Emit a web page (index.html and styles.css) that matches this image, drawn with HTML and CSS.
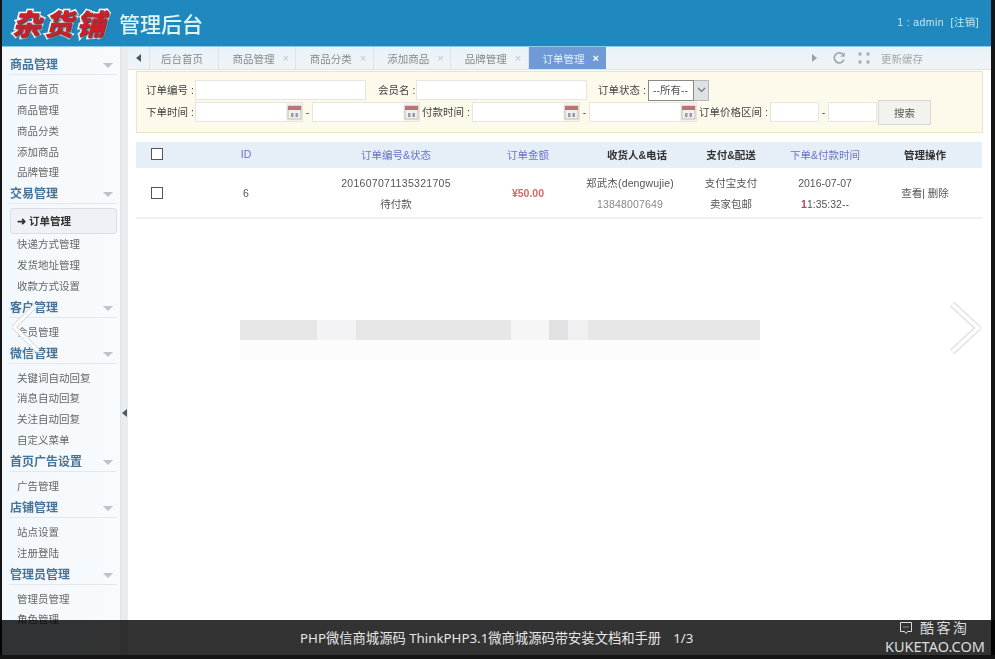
FILE: index.html
```html
<!DOCTYPE html>
<html lang="zh-CN">
<head>
<meta charset="utf-8">
<title>杂货铺 管理后台</title>
<link rel="stylesheet" href="styles.css">
</head>
<body>
<svg class="defs" width="0" height="0" aria-hidden="true">
  <symbol id="cal" viewBox="0 0 15 15">
    <rect x="1" y="1" width="13" height="13" fill="#f3efe8" stroke="#c4bdb5"/>
    <rect x="1" y="1" width="13" height="4" fill="#b9737a"/>
    <path d="M4 8h2.5v4H4zM8.5 8H11v4H8.5z" fill="#8c9cb2"/>
  </symbol>
</svg>
<div class="shot">
  <div class="app">
    <header class="top">
      <div class="logo">杂货铺</div>
      <div class="title">管理后台</div>
      <div class="user">1 : admin &nbsp;[注销]</div>
    </header>
    <div class="body">
      <aside class="side">
        <h3 class="group">商品管理<i class="down"></i></h3>
        <a class="item">后台首页</a>
        <a class="item">商品管理</a>
        <a class="item">商品分类</a>
        <a class="item">添加商品</a>
        <a class="item">品牌管理</a>
        <h3 class="group">交易管理<i class="down"></i></h3>
        <a class="item active">➜ 订单管理</a>
        <a class="item">快递方式管理</a>
        <a class="item">发货地址管理</a>
        <a class="item">收款方式设置</a>
        <h3 class="group">客户管理<i class="down"></i></h3>
        <a class="item">会员管理</a>
        <h3 class="group">微信管理<i class="down"></i></h3>
        <a class="item">关键词自动回复</a>
        <a class="item">消息自动回复</a>
        <a class="item">关注自动回复</a>
        <a class="item">自定义菜单</a>
        <h3 class="group">首页广告设置<i class="down"></i></h3>
        <a class="item">广告管理</a>
        <h3 class="group">店铺管理<i class="down"></i></h3>
        <a class="item">站点设置</a>
        <a class="item">注册登陆</a>
        <h3 class="group">管理员管理<i class="down"></i></h3>
        <a class="item">管理员管理</a>
        <a class="item">角色管理</a>
      </aside>
      <div class="split"><i class="tri-left small"></i></div>
      <main class="main">
        <nav class="tabs">
          <span class="nav-arrow"><i class="tri-left"></i></span>
          <span class="tab first">后台首页</span>
          <span class="tab">商品管理<b>×</b></span>
          <span class="tab">商品分类<b>×</b></span>
          <span class="tab">添加商品<b>×</b></span>
          <span class="tab">品牌管理<b>×</b></span>
          <span class="tab on">订单管理<b>×</b></span>
          <span class="tools">
            <i class="tri-right"></i>
            <svg class="tool" width="14" height="14" viewBox="0 0 14 14"><path d="M11.5 4.2A5 5 0 1 0 12 8.5" fill="none" stroke="#a3abb0" stroke-width="1.8"/><path d="M12.8 1.2v4.6H8.2z" fill="#a3abb0"/></svg>
            <svg class="tool" width="14" height="14" viewBox="0 0 14 14" fill="#a3abb0"><rect x="1.5" y="1.5" width="3" height="3"/><rect x="9.5" y="1.5" width="3" height="3"/><rect x="1.5" y="9.5" width="3" height="3"/><rect x="9.5" y="9.5" width="3" height="3"/></svg>
            <span class="refresh">更新缓存</span>
          </span>
        </nav>
        <form class="filter">
          <div class="frow">
            <label class="lab w-lab">订单编号 :</label><input class="inp w-order">
            <label class="lab w-name">会员名 :</label><input class="inp w-order">
            <label class="lab w-status">订单状态 :</label>
            <span class="sel"><select class="sel-box"><option>--所有--</option></select><span class="sel-btn"><svg width="9" height="6" viewBox="0 0 9 6"><path d="M1 1l3.5 3.5L8 1" fill="none" stroke="#6f7880" stroke-width="1.2"/></svg></span></span>
          </div>
          <div class="frow second">
            <label class="lab w-lab">下单时间 :</label>
            <span class="date"><svg class="cal" width="15" height="15"><use href="#cal"/></svg></span><span class="dash">-</span>
            <span class="date"><svg class="cal" width="15" height="15"><use href="#cal"/></svg></span>
            <label class="lab w-pay">付款时间 :</label>
            <span class="date"><svg class="cal" width="15" height="15"><use href="#cal"/></svg></span><span class="dash">-</span>
            <span class="date"><svg class="cal" width="15" height="15"><use href="#cal"/></svg></span>
            <label class="lab w-price">订单价格区间 :</label>
            <input class="inp w-price-inp"><span class="dash">-</span><input class="inp w-price-inp">
            <button class="search" type="button">搜索</button>
          </div>
        </form>
        <table class="list">
          <thead>
            <tr>
              <th class="c-check"><input type="checkbox" class="box"></th>
              <th class="c-id blue">ID</th>
              <th class="c-no blue">订单编号&amp;状态</th>
              <th class="c-amt blue">订单金额</th>
              <th class="c-rcv">收货人&amp;电话</th>
              <th class="c-pay">支付&amp;配送</th>
              <th class="c-time blue">下单&amp;付款时间</th>
              <th class="c-op">管理操作</th>
            </tr>
          </thead>
          <tbody>
            <tr>
              <td><input type="checkbox" class="box"></td>
              <td>6</td>
              <td class="num"><p>201607071135321705</p><p>待付款</p></td>
              <td class="money">¥50.00</td>
              <td class="rcv"><p>郑武杰(dengwujie)</p><p class="soft">13848007649</p></td>
              <td class="dbl"><p>支付宝支付</p><p>卖家包邮</p></td>
              <td class="dbl"><p>2016-07-07</p><p><span class="pink">1</span>1:35:32--</p></td>
              <td class="op">查看| 删除</td>
            </tr>
          </tbody>
        </table>
      </main>
    </div>
  </div>

  <div class="mosaic" aria-hidden="true">
    <div class="mos-main">
      <span class="m1"></span><span class="m2"></span><span class="m3"></span><span class="m4"></span><span class="m5"></span><span class="m6"></span><span class="m7"></span>
    </div>
    <div class="mos-faint"></div>
  </div>

  <svg class="chev chev-l" width="30" height="58" viewBox="0 0 30 58"><polyline points="24,7 2,29 26,53" fill="none" stroke="#d8dbdf" stroke-width="5"/><polyline points="24,7 2,29 26,53" fill="none" stroke="#fff" stroke-width="3"/></svg>
  <svg class="chev chev-r" width="32" height="54" viewBox="0 0 32 54"><polyline points="3,3 29,27 3,51" fill="none" stroke="#d5d8dc" stroke-width="6"/><polyline points="3,3 29,27 3,51" fill="none" stroke="#fff" stroke-width="4"/></svg>

  <footer class="bar">
    <div class="caption">PHP微信商城源码 ThinkPHP3.1微商城源码带安装文档和手册<span class="count">1/3</span></div>
    <div class="mark">
      <div class="mark-top">
        <svg width="14" height="14" viewBox="0 0 14 14"><path d="M1.5 1.5h11v9H8.5L7 12.5 5.5 10.5h-4z" fill="none" stroke="#ddd"/><path d="M4.5 6h1M6.5 6h1M8.5 6h1" stroke="#ddd"/></svg>
        <span>酷客淘</span>
      </div>
      <div class="mark-url">KUKETAO.COM</div>
    </div>
  </footer>
</div>
</body>
</html>
```

FILE: styles.css
```css
* { box-sizing: border-box; }
html, body { margin: 0; height: 100%; overflow: hidden; }
body {
  background: #141414;
  font-family: "Liberation Sans", "Noto Sans CJK SC", sans-serif;
  font-size: 10.5px;
  color: #555;
}
.defs { position: absolute; }
.shot { position: relative; width: 995px; height: 659px; overflow: hidden; }
.app {
  width: 989px;
  height: 655px;
  margin-left: 2px;
  background: #fff;
  display: flex;
  flex-direction: column;
  overflow: hidden;
  filter: blur(.7px);
}

/* header */
.top {
  height: 47px;
  flex: none;
  background: #1f88bf;
  display: flex;
  align-items: center;
  padding: 0 12px 0 10px;
  border-bottom: 1px solid #8fcbe6;
}
.logo {
  font-family: "Noto Sans CJK SC", sans-serif;
  font-weight: 900;
  font-size: 29px;
  letter-spacing: 3px;
  font-style: italic;
  line-height: 1;
  color: #cc1f27;
  -webkit-text-stroke: 3px #fff;
  paint-order: stroke fill;
  text-shadow: 1px 1px 2px #123a55;
  width: 108px;
  margin-top: -2px;
}
.title {
  font-family: "Noto Sans CJK SC", sans-serif;
  font-size: 21px;
  font-weight: 500;
  color: #dff6f6;
  line-height: 1;
  margin-left: -1px;
}
.user {
  margin-left: auto;
  color: #c4e8f0;
  font-size: 10.5px;
  letter-spacing: .4px;
  margin-top: -3px;
}

.body { flex: 1; display: flex; min-height: 0; }

/* sidebar */
.side {
  width: 118px;
  flex: none;
  background: linear-gradient(90deg, #f3f8fc, #f8fbfd);
  padding: 7px 3px 0 7px;
  overflow: hidden;
}
.group {
  position: relative;
  margin: 0 0 4px;
  height: 21px;
  line-height: 23px;
  padding-left: 1px;
  font-size: 12px;
  font-weight: 700;
  color: #467399;
  border-bottom: 1px solid #e3e8ec;
}
.down {
  position: absolute;
  right: 4px;
  top: 9px;
  border: 5px solid transparent;
  border-top: 5px solid #bcc2c8;
  border-bottom: 0;
}
.item {
  display: block;
  height: 20.85px;
  line-height: 20.85px;
  padding-left: 8px;
  color: #666;
}
.item.active {
  height: 26px;
  line-height: 24px;
  margin-left: 1px;
  padding-left: 6px;
  color: #333;
  font-weight: 700;
  background: #eef2f6;
  border: 1px solid #d9dfe5;
  border-radius: 3px;
}

.split {
  width: 8px;
  flex: none;
  background: #e9ecef;
  border-left: 1px solid #dfe3e6;
  display: flex;
  align-items: flex-start;
  justify-content: flex-start;
  padding: 362px 0 0 1px;
}
.tri-left {
  display: inline-block;
  border: 4px solid transparent;
  border-right: 5px solid #4d5a63;
  border-left: 0;
}
.tri-right {
  display: inline-block;
  border: 4px solid transparent;
  border-left: 5px solid #9aa2a8;
  border-right: 0;
  margin-right: 4px;
}

/* main */
.main { flex: 1; min-width: 0; display: flex; flex-direction: column; }
.tabs {
  height: 23px;
  flex: none;
  display: flex;
  align-items: stretch;
  background: linear-gradient(#e7f3f9, #f0f4f6);
  border-bottom: 1px solid #e4e2d4;
  color: #888;
}
.nav-arrow {
  width: 22px;
  display: flex;
  align-items: center;
  justify-content: center;
  border-right: 1px solid #dde4e8;
}
.tab {
  width: 77.4px;
  display: flex;
  align-items: center;
  justify-content: center;
  gap: 8px;
  padding-left: 7px;
  border-right: 1px solid #dde4e8;
  white-space: nowrap;
}
.tab.first { width: 69px; padding: 0 4px 0 0; }
.tab b { font-weight: 400; color: #c0c6ca; font-size: 11px; }
.tab.on { background: #6f9ad6; color: #e4effb; border-right: 0; }
.tab.on b { color: #fff; font-weight: 700; }
.tools {
  margin-left: auto;
  display: flex;
  align-items: center;
  gap: 11px;
  padding-right: 68px;
  color: #a8a8a8;
}
.refresh { margin-left: -1px; }

/* filter */
.filter {
  margin: 1px 8px 0;
  height: 62px;
  flex: none;
  background: #fdfaec;
  border: 1px solid #ebe5c8;
  padding: 8px 0 0 9px;
  color: #444;
}
.frow { display: flex; align-items: center; height: 20px; }
.second { margin-top: 2px; }
.lab { white-space: nowrap; padding-bottom: 2px; }
.w-lab { width: 49px; }
.w-name { width: 38px; margin-left: 12px; }
.w-status { width: 50px; margin-left: 11px; }
.w-pay { width: 50px; margin-left: 2px; }
.w-price { width: 71px; margin-left: 2px; }
.inp {
  height: 20px;
  padding: 0;
  background: #fff;
  border: 1px solid #e6e6df;
  outline: 0;
  flex: none;
}
.w-order { width: 171px; }
.w-price-inp { width: 49px; }
.date {
  width: 108px;
  height: 20px;
  flex: none;
  display: flex;
  align-items: center;
  justify-content: flex-end;
  background: linear-gradient(90deg, #fff 85%, #f4f2ec 85%);
  border: 1px solid #e6e6df;
  padding-right: 0;
}
.dash { width: 9px; text-align: center; flex: none; }
.sel { display: flex; width: 61px; height: 21px; flex: none; }
.sel-box {
  appearance: none;
  flex: 1;
  min-width: 0;
  height: 21px;
  border: 1px solid #8a8a84;
  background: #fff;
  color: #555;
  font: inherit;
  padding: 0 0 0 4px;
  outline: 0;
}
.sel-btn {
  width: 15px;
  background: #dfe2e2;
  border: 1px solid #b4b8b8;
  border-left: 0;
  display: flex;
  align-items: center;
  justify-content: center;
}
.search {
  width: 53px;
  height: 25px;
  flex: none;
  margin: 1px 0 0 1px;
  border: 1px solid #d8d8d2;
  background: #f2f2ee;
  color: #555;
  font: inherit;
  padding: 0;
}

/* table */
.list {
  margin: 9px 8px 0;
  width: 846px;
  table-layout: fixed;
  border-collapse: collapse;
  text-align: center;
}
.list th {
  height: 26px;
  background: #e6eef7;
  font-weight: 700;
  color: #333;
  padding: 0 0 2px;
}
.list th.blue { color: #6a74c8; font-weight: 400; }
.list td {
  height: 50px;
  padding: 0;
  color: #555;
  border-bottom: 2px solid #eef0f2;
}
.list p { margin: 0; line-height: 21px; }
.list td.num, .list td.rcv, .list td.dbl { padding-top: 2px; }
.box {
  appearance: none;
  display: block;
  width: 12px;
  height: 12px;
  margin: 0 auto;
  background: #fff;
  border: 1px solid #555;
}
.c-check { width: 42px; }
.c-id { width: 136px; }
.c-no { width: 164px; }
.c-amt { width: 100px; }
.c-rcv { width: 118px; }
.c-pay { width: 70px; }
.c-time { width: 118px; }
.c-op { width: 98px; padding-right: 16px !important; }
.op { padding-right: 16px !important; }
.num p:first-child { letter-spacing: .3px; }
.rcv { padding-right: 14px !important; letter-spacing: .15px; }
.money { color: #d9666b !important; font-weight: 700; }
.soft { color: #888; }
.pink { color: #b8416e; font-weight: 700; }

/* overlays belonging to the photographed slide */
.mosaic { position: absolute; left: 240px; top: 320px; width: 520px; }
.mos-main { display: flex; height: 20px; }
.mos-main span { display: block; height: 100%; }
.m1 { width: 77px; background: #e6e6e7; }
.m2 { width: 39px; background: #f3f3f5; }
.m3 { width: 155px; background: #e7e7e8; }
.m4 { width: 38px; background: #f6f6f6; }
.m5 { width: 19px; background: #e2e2e4; }
.m6 { width: 20px; background: #f0f0f2; }
.m7 { width: 172px; background: #e7e7e8; }
.mos-faint { height: 20px; background: #fcfcfc; }
.chev { position: absolute; }
.chev-l { left: 12px; top: 298px; }
.chev-r { left: 949px; top: 301px; }

.bar {
  position: absolute;
  left: 0;
  top: 620px;
  width: 995px;
  height: 35px;
  background: rgba(0, 0, 0, .8);
  color: #e6e6e6;
  font-family: "Noto Sans", "Noto Sans CJK SC", sans-serif;
}
.caption {
  position: absolute;
  left: 300px;
  top: 0;
  line-height: 36px;
  font-size: 13.3px;
  white-space: nowrap;
}
.count { margin-left: 12px; }
.mark {
  position: absolute;
  left: 885px;
  top: 0;
  width: 104px;
  height: 35px;
  color: #ddd;
}
.mark-top {
  display: flex;
  align-items: center;
  height: 15px;
  padding-left: 14px;
  gap: 7px;
  font-family: "Noto Sans CJK SC", sans-serif;
  font-size: 14px;
  letter-spacing: 2.5px;
  line-height: 15px;
}
.mark-url {
  margin-top: 3px;
  font-size: 14.5px;
  line-height: 17px;
  white-space: nowrap;
}
```
